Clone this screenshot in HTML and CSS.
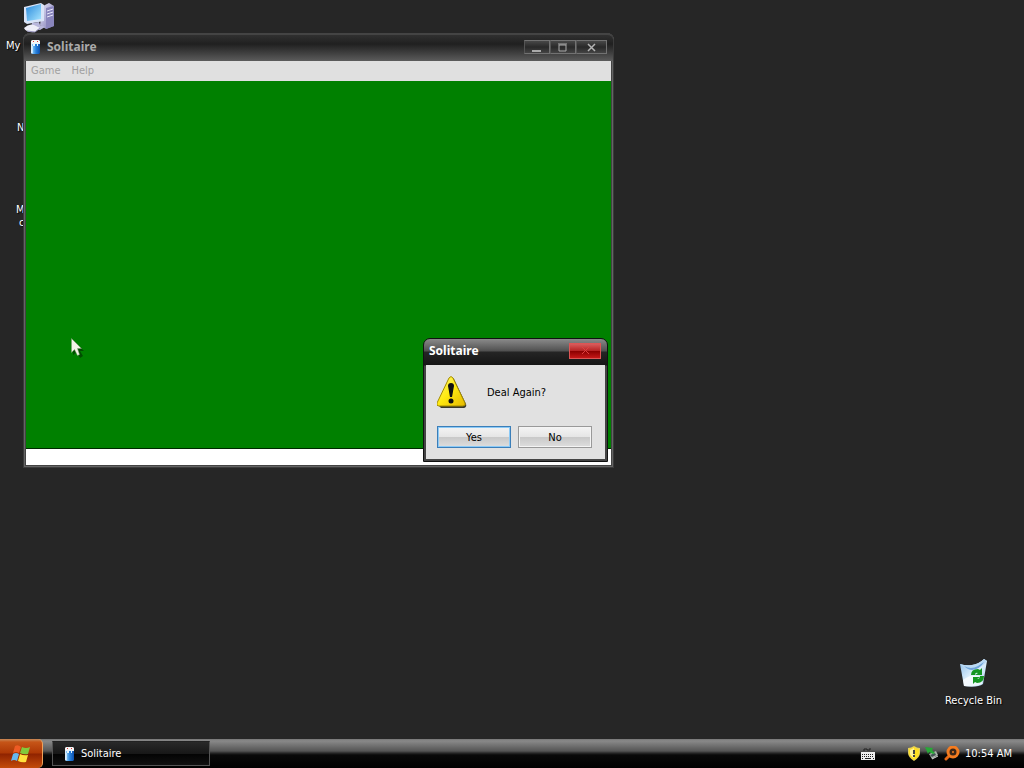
FILE: index.html
```html
<!DOCTYPE html>
<html lang="en">
<head>
	<meta charset="utf-8">
	<title>Solitaire</title>
	<link rel="stylesheet" href="styles.css">
</head>
<body>

	<svg class="defs" aria-hidden="true">
		<defs>
			<linearGradient id="cardBlue" x2="1" y2="0">
				<stop offset="0" stop-color="#8ccdfa"/>
				<stop offset=".5" stop-color="#2680dc"/>
				<stop offset="1" stop-color="#0b4fae"/>
			</linearGradient>
			<linearGradient id="screenBlue" x2="1" y2="1">
				<stop offset="0" stop-color="#2989dc"/>
				<stop offset="1" stop-color="#a7e5ff"/>
			</linearGradient>
			<linearGradient id="caseGrey" x2="1" y2="1">
				<stop offset="0" stop-color="#e9e8fa"/>
				<stop offset="1" stop-color="#7773b0"/>
			</linearGradient>
			<linearGradient id="binGlass" x2="1" y2="1">
				<stop offset="0" stop-color="#86b9e8"/>
				<stop offset=".5" stop-color="#dff0fc"/>
				<stop offset="1" stop-color="#a9d2f2"/>
			</linearGradient>
			<linearGradient id="warnYellow" x2="1" y2="1">
				<stop offset="0" stop-color="#fffa80"/>
				<stop offset=".5" stop-color="#ffe910"/>
				<stop offset="1" stop-color="#e5b800"/>
			</linearGradient>
			<symbol id="cards" viewBox="0 0 12 16">
				<path d="M2 1h7l1 1v3H1V2z" fill="#f4f4f4"/>
				<path d="M3 2h1v1H3zM7 2h1v1H7z" fill="#d33"/>
				<path d="M1 4h1v11L1 14z" fill="#dcecfb"/>
				<path d="M2 5h8v9l-1 1H2z" fill="url(#cardBlue)"/>
				<path d="M3 4h5v3H3z" fill="#e3f4ff"/>
				<path d="M5 5h2v2H5z" fill="#247cda"/>
				<path d="M2 7h1v7H2z" fill="#c4e6ff"/>
			</symbol>
		</defs>
	</svg>

	<main class="desktop">

		<div class="icon computer">
			<svg width="32" height="30" viewBox="0 0 32 30">
				<path d="M20 3l6-3 5 3v20l-8 3-6-4z" fill="url(#caseGrey)"/>
				<path d="M23 5l8-2v20l-8 3z" fill="#8a86bd"/>
				<path d="M24 8l6-2M24 11l6-2M24 14l6-2" stroke="#e7e6fa" fill="none"/>
				<path d="M1 4l17-4 3 2v16L4 21 1 19z" fill="#d9e4f8"/>
				<path d="M3 5l15-4v15L4 18z" fill="url(#screenBlue)"/>
				<path d="M9 20l7-1 1 3 5 2-5 3-9-2z" fill="#b9b7dc"/>
				<path d="M1 25q5-5 10-3l6 3-5 4q-9 1-11-4z" fill="#eeeef8"/>
				<path d="M4 28l8 1 5-4" stroke="#9693bb" fill="none"/>
			</svg>
			<span>My</span>
		</div>
		<div class="icon second"><span>N</span></div>
		<div class="icon third"><span>M</span><span>c</span></div>

		<div class="icon recycle">
			<svg width="28" height="30" viewBox="0 0 28 30">
				<path d="M1 6q6 2 12 1 7-1 12-6l3 2-4 23q-6 4-19 2z" fill="url(#binGlass)"/>
				<path d="M1 6q6 2 12 1 7-1 12-6l3 2q-5 7-14 8Q6 12 1 6z" fill="#b9d9f4"/>
				<path d="M5 8q7 4 14 0l6-4q-4 7-12 8-4 0-8-4z" fill="#6fa4da"/>
				<path d="M4 22q9-7 20-3l-1 7q-6 3-18 2z" fill="#fff" opacity=".7"/>
				<path d="M12 17q0-6 7-6l2 1 2-2v7h-7l3-2q-3-1-3 2zM25 18q0 7-7 7l-2-1-2 2v-7h7l-3 2q3 0 3-3z" fill="#159622"/>
			</svg>
			<span>Recycle Bin</span>
		</div>

		<section class="window">
			<header class="window-title">
				<svg width="12" height="16"><use href="#cards"/></svg>
				<h1>Solitaire</h1>
				<div class="controls">
					<button type="button" aria-label="Minimize"><svg width="10" height="9"><path d="M0 7h9v2H0z" fill="#aaa"/></svg></button>
					<button type="button" aria-label="Maximize"><svg width="10" height="9"><path d="M1 2h7v6H1zM0 1h9" stroke="#aaa" fill="none"/></svg></button>
					<button type="button" class="wide" aria-label="Close"><svg width="9" height="9"><path d="M1 1l7 7M8 1L1 8" stroke="#b4b4b4" stroke-width="1.5"/></svg></button>
				</div>
			</header>
			<nav class="menu">
				<a href="#">Game</a>
				<a href="#">Help</a>
			</nav>
			<div class="table"></div>
			<div class="status"></div>
		</section>

		<section class="dialog" role="dialog" aria-labelledby="dialogTitle">
			<header class="dialog-title">
				<h2 id="dialogTitle">Solitaire</h2>
				<button type="button" class="dialog-close" aria-label="Close"><svg width="9" height="7"><path d="M1 0l7 7M8 0L1 7" stroke="#df4040"/></svg></button>
			</header>
			<div class="dialog-body">
				<div class="message">
					<svg width="30" height="32" viewBox="0 0 30 32">
						<path d="M14 2q2-1 3 1l12 25q1 3-2 4H4l-2-2z" fill="#38382c"/>
						<path d="M12 2q2-3 4 0l12 25q1 3-2 3H2q-3 0-2-3z" fill="url(#warnYellow)" stroke="#a48c00"/>
						<path d="M11 10q0-3 3-3t3 3l-2 11h-2z" fill="#111"/>
						<circle cx="14" cy="25" r="2.5" fill="#111"/>
					</svg>
					<p>Deal Again?</p>
				</div>
				<div class="buttons">
					<button type="button" class="default">Yes</button>
					<button type="button">No</button>
				</div>
			</div>
		</section>

		<svg class="cursor" width="13" height="20" viewBox="0 0 13 20">
			<path d="M2 2v15l4-3 3 6 3-2-3-5h4z" fill="#042b04" opacity=".6"/>
			<path d="M.5 .5v14l3-3 3 6 2-1-2-6h4z" fill="#f4f4e8" stroke="#7d9b70" stroke-width=".5"/>
		</svg>
	</main>

	<footer class="taskbar">
		<button type="button" class="start" aria-label="Start">
			<svg width="20" height="18" viewBox="0 0 20 18">
				<path d="M4 1q3-2 6 1L8 8Q5 6 2 8z" fill="#ee5b24"/>
				<path d="M11 2q4 2 8 0l-2 7q-4 1-8-1z" fill="#83c93b"/>
				<path d="M2 9q3-2 6 0l-2 7q-3-2-6 0z" fill="#65b7ee"/>
				<path d="M9 9q4 2 8 1l-2 7q-4 1-8-1z" fill="#ffe13c"/>
			</svg>
		</button>
		<button type="button" class="task">
			<svg width="12" height="16"><use href="#cards"/></svg>
			Solitaire
		</button>
		<div class="tray">
			<svg class="keyboard" width="14" height="16" viewBox="0 0 14 16">
				<path d="M3 5V3h3v1h3V2" stroke="#222" fill="none"/>
				<path d="M0 6h14v8H0z" fill="#eee"/>
				<path d="M1 8.500h12M1 10.500h12" stroke="#222" stroke-dasharray="1 1"/>
				<path d="M1 12.500h1M4 12.500h6M12 12.500h1" stroke="#222"/>
			</svg>
			<svg width="12" height="16" viewBox="0 0 12 16">
				<path d="M6 0q3 2 6 2v5q0 4-6 8-6-4-6-8V2q3 0 6-2z" fill="#e3cf5a"/>
				<path d="M6 1q2 2 5 2v4q0 4-5 7-5-3-5-7V3q3 0 5-2z" fill="#ffdf22"/>
				<path d="M2 4l4-2v10Q2 10 2 7z" fill="#fff29a"/>
				<path d="M5 4h2v4H5zM5 9h2v2H5z" fill="#444"/>
			</svg>
			<svg width="14" height="16" viewBox="0 0 14 16">
				<path d="M4 8l7-3 2 4-6 4z" fill="#aab4aa"/>
				<path d="M5 9l5-2 1 2-4 2z" fill="#455"/>
				<path d="M0 1l8 1-1 2 3 3-2 1-4-2-1 2z" fill="#27a837"/>
				<path d="M7 13l6-3" stroke="#ddd"/>
			</svg>
			<svg width="16" height="16" viewBox="0 0 16 16">
				<path d="M2 13l4-4" stroke="#e96a16" stroke-width="3" stroke-linecap="round"/>
				<circle cx="9" cy="6" r="5" fill="#3d2718" stroke="#f47c20" stroke-width="3"/>
				<circle cx="9" cy="6" r="1" fill="#f47c20"/>
			</svg>
			<time>10:54 AM</time>
		</div>
	</footer>

</body>
</html>
```
FILE: styles.css
```css
* {
	box-sizing: border-box;
}

body {
	margin: 0;
	height: 100vh;
	display: flex;
	flex-direction: column;
	overflow: hidden;
	background: #262626;
	color: #fff;
	font: 11px/13px "DejaVu Sans Condensed", "Noto Sans", sans-serif;
}

button {
	margin: 0;
	padding: 0;
	font: inherit;
	color: inherit;
}

svg {
	display: block;
	flex: none;
}

h1, h2, p {
	margin: 0;
}

.defs {
	position: absolute;
	width: 0;
	height: 0;
}

.desktop {
	position: relative;
	flex: 1;
}

/* desktop icons */
.icon {
	position: absolute;
	display: flex;
	flex-direction: column;
	align-items: center;
	white-space: nowrap;
	text-shadow: 1px 1px 1px #000;
}

.icon svg {
	margin-bottom: 6px;
}

.computer {
	left: 6px;
	top: 3px;
	align-items: flex-start;
}

.computer svg {
	margin-left: 17px;
}

.second {
	left: 17px;
	top: 121px;
}

.third {
	left: 16px;
	top: 203px;
	align-items: flex-end;
}

.recycle {
	right: 22px;
	top: 658px;
}

/* main window */
.window {
	position: absolute;
	left: 23px;
	top: 33px;
	width: 591px;
	height: 435px;
	display: flex;
	flex-direction: column;
	padding: 0 3px 3px;
	border-radius: 7px 7px 0 0;
	background: #434343;
	box-shadow: inset 0 0 0 1px #3b3b3b, inset 0 0 0 2px #656565;
}

.window-title {
	height: 28px;
	flex: none;
	display: flex;
	align-items: center;
	gap: 5px;
	margin: 0 -2px;
	padding: 0 6px 2px;
	border-top: 2px solid #444;
	border-radius: 6px 6px 0 0;
	background: linear-gradient(#303030, #202020 35%, #444 75%, #5c5c5c);
	color: #aaa;
}

.window-title h1,
.dialog-title h2 {
	font: bold 12px/14px "Noto Sans", sans-serif;
}

.controls {
	display: flex;
	margin-left: auto;
}

.controls button {
	width: 26px;
	height: 14px;
	display: flex;
	align-items: center;
	justify-content: center;
	border: 1px solid #727272;
	border-left-color: #555;
	background: linear-gradient(#484848, #292929 50%, #444);
}

.controls .wide {
	width: 31px;
}

.menu {
	height: 20px;
	flex: none;
	display: flex;
	align-items: center;
	gap: 11px;
	padding: 0 5px 2px;
	background: #e0e0e0;
}

.menu a {
	color: #a0a0a0;
	text-decoration: none;
}

.table {
	flex: 1;
	background: #008000;
	border-bottom: 1px solid #002800;
}

.status {
	height: 16px;
	background: #fff;
}

/* message box */
.dialog {
	position: absolute;
	left: 423px;
	top: 338px;
	width: 185px;
	height: 124px;
	display: flex;
	flex-direction: column;
	padding: 1px 2px 2px;
	border: 1px solid #111;
	border-radius: 7px 7px 0 0;
	background: linear-gradient(#8a8a8a, #777 4px, #505050 12px, #252525 13px, #151515 26px, #444 27px);
}

.dialog-title {
	height: 25px;
	flex: none;
	display: flex;
	align-items: center;
	justify-content: space-between;
	padding: 0 4px 4px 3px;
}

.dialog-close {
	width: 32px;
	height: 16px;
	display: flex;
	align-items: center;
	justify-content: center;
	border: 1px solid #d55;
	background: linear-gradient(#d95c5c, #b52222 50%, #8a0000 51%, #c41818);
}

.dialog-body {
	flex: 1;
	padding: 11px;
	background: #e1e1e1;
	color: #000;
}

.message {
	display: flex;
	align-items: center;
	gap: 20px;
	margin-bottom: 18px;
}

.buttons {
	display: flex;
	gap: 7px;
}

.buttons button {
	width: 74px;
	height: 22px;
	border: 1px solid #999;
	box-shadow: inset 0 0 0 1px #f4f4f4;
	background: linear-gradient(#f4f4f4, #e5e5e5 50%, #c8c8c8 51%, #dedede);
}

.buttons .default {
	border-color: #3b7eb8;
	box-shadow: inset 0 0 0 1px #8bcaf7;
}

.cursor {
	position: absolute;
	left: 71px;
	top: 338px;
}

/* taskbar */
.taskbar {
	height: 29px;
	display: flex;
	align-items: center;
	gap: 9px;
	background: linear-gradient(#777, #898989 2px, #555 12px, #292929 14px, #090909 16px, #000);
}

.start {
	width: 43px;
	height: 29px;
	display: flex;
	align-items: center;
	justify-content: center;
	border: 0;
	border-right: 1px solid #efa25c;
	border-radius: 0 5px 5px 0;
	background: linear-gradient(#c88a58, #c65518 3px, #ad3705 14px, #8f2300 15px, #c44b0a);
}

.task {
	width: 158px;
	height: 25px;
	display: flex;
	align-items: center;
	gap: 5px;
	padding: 0 11px;
	border: 1px solid #555;
	border-top-color: #222;
	background: linear-gradient(#292929, #181818 50%, #030303 51%, #111);
}

.tray {
	display: flex;
	align-items: center;
	gap: 5px;
	margin-left: auto;
	padding-right: 12px;
}

.keyboard {
	margin-right: 28px;
}
```
